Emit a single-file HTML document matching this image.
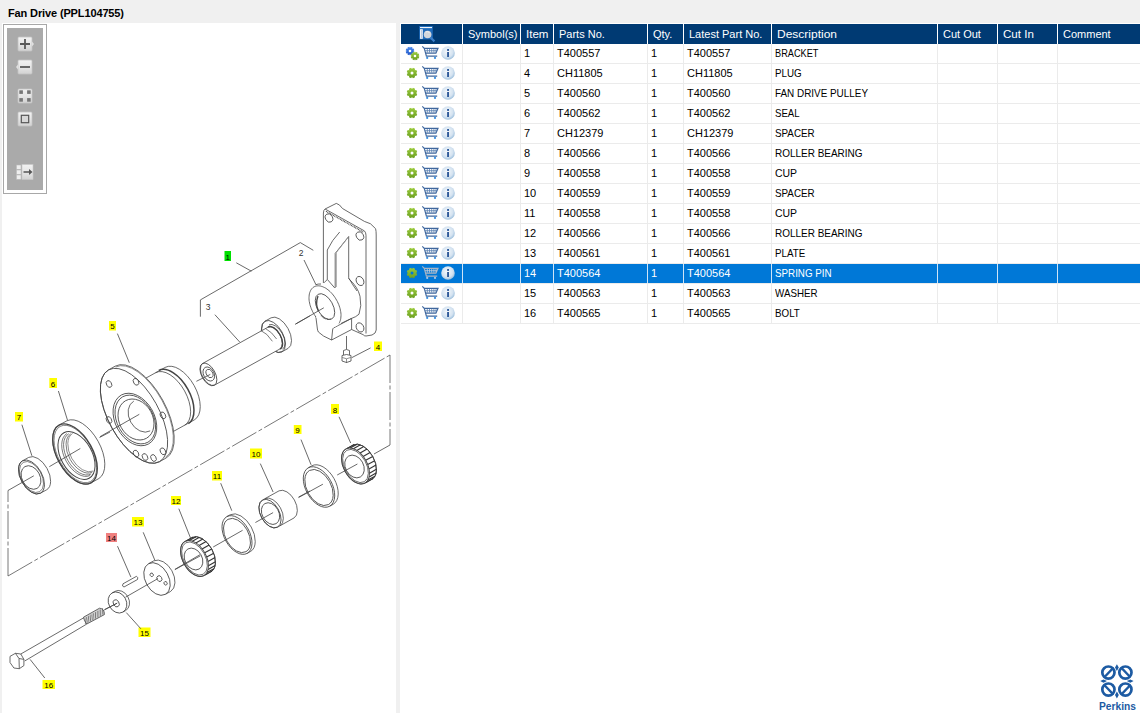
<!DOCTYPE html>
<html><head><meta charset="utf-8">
<style>
*{margin:0;padding:0;box-sizing:border-box}
html,body{width:1140px;height:713px;overflow:hidden;background:#fff;font-family:"Liberation Sans",sans-serif;position:relative}
#title{position:absolute;left:0;top:0;width:1140px;height:23px;background:#f0f0f0;}
#title span{position:absolute;left:8px;top:7px;font-size:11px;font-weight:bold;color:#000;white-space:nowrap;letter-spacing:-0.13px}
#leftstrip{position:absolute;left:0;top:23px;width:2px;height:690px;background:#f0f0f0}
#splitter{position:absolute;left:396px;top:23px;width:4px;height:690px;background:#f0f0f0}
.th{position:absolute;top:24px;height:20px;background:#003a73;color:#fff;font-size:11px;line-height:20px;padding-left:5px;white-space:nowrap;overflow:hidden;border-right:1px solid #fff}
.td{position:absolute;height:19px;font-size:11px;line-height:19px;padding-left:3px;white-space:nowrap;overflow:hidden;border-right:1px solid #ebebeb;color:#000}
.td.sel{background:#0078d7;color:#fff;border-right-color:#cfe4f7}
.rowline{position:absolute;left:401px;width:739px;height:1px;background:#ebebeb}
</style></head><body>
<div id="title"><span>Fan Drive (PPL104755)</span></div>
<div id="leftstrip"></div>
<div id="splitter"></div>
<svg style="position:absolute;left:0;top:0" width="396" height="713" viewBox="0 0 396 713" font-family="Liberation Sans, sans-serif"><g stroke="#444" stroke-width="0.8" fill="none">
<path d="M8.0,576.0 L8.0,490.5" stroke-dasharray="28,2.5,4,2.5" stroke="#555"/>
<path d="M8.0,576.0 L390.0,355.0" stroke-dasharray="28,2.5,4,2.5" stroke="#555"/>
<path d="M390.0,355.0 L390.0,445.0" stroke-dasharray="28,2.5,4,2.5" stroke="#555"/>
<path d="M390.0,445.0 L374.0,454.0" />
<path d="M200.4,316.7 L200.4,299.9 L300.3,242.6 L313.3,250.3" />
<rect x="224.5" y="251" width="6.5" height="10" fill="#00e000" stroke="none"/>
<text x="227.8" y="259.5" text-anchor="middle" fill="#000" stroke="none" style="font-family:'Liberation Sans',sans-serif;font-size:8px">1</text>
<path d="M236.3,262.8 L251.4,271.2" />
<text x="301" y="256" text-anchor="middle" fill="#333" stroke="none" style="font-family:'Liberation Sans',sans-serif;font-size:8.5px">2</text>
<path d="M304.0,260.0 L316.0,284.8" />
<text x="208" y="310" text-anchor="middle" fill="#333" stroke="none" style="font-family:'Liberation Sans',sans-serif;font-size:8.5px">3</text>
<path d="M214.9,314.7 L239.7,342.0" />
<path d="M282.0,351.8 A9.6,17.5 -29.0 0 1 265.0,321.2 L271.1,317.8 A9.6,17.5 -29.0 0 1 288.1,348.4 Z" fill="#fff" />
<ellipse cx="273.5" cy="336.5" rx="9.6" ry="17.5" transform="rotate(-29.0 273.5 336.5)" />
<path d="M214.4,385.2 A6.8,12.4 -29.0 0 1 202.4,363.6 L268.0,327.2 A6.8,12.4 -29.0 0 1 280.0,348.9 Z" fill="#fff" />
<path d="M280.1,349.1 A6.9,12.6 -29.0 0 0 267.9,327.0" stroke-width="1.4"/>
<path d="M282.5,349.3 A7.7,14.0 -29.0 0 0 269.0,324.8" />
<ellipse cx="208.4" cy="374.4" rx="6.8" ry="12.4" transform="rotate(-29.0 208.4 374.4)" />
<ellipse cx="208.8" cy="374.0" rx="5.2" ry="7.5" transform="rotate(-29.0 208.8 374.0)" />
<ellipse cx="209.5" cy="373.5" rx="3.1" ry="4.5" transform="rotate(-29.0 209.5 373.5)" />
<path d="M260.8,330.5 Q267,333 272.4,341.3 M265.5,328.5 Q272,332 276.6,339" stroke-width="0.7"/>
<path d="M196.4,381.3 L210.3,374.4" />
<path d="M295.2,324.3 L309.9,315.9" />
<path d="M323.4,283 L323.4,213 Q323.6,209.5 325.1,209 L336.3,203.4 Q339.5,204 342.5,208.5 L364.4,221.4 Q371,222.5 375.6,228.7 Q376.2,231 376.2,235 L376.2,330 Q376,333.5 372,335 L366,336 Q364,336 363.2,334.7 L351.6,329.5"/>
<path d="M325.1,209 L364.4,230.9 Q366,232.5 366,235.4 L366,333.5"/>
<path d="M326.0,211.3 L363.8,232.4" stroke-width="1.3" stroke-dasharray="0.9,0.7"/>
<path d="M339.7,232 Q332,240 327.3,250 L327.3,279.5 L324.2,282.6 M348.7,236.5 L335.2,253.4 L335.2,287.9 M348.7,236.5 L348.7,277.8 Q352,284 357,291"/>
<path d="M348,237.5 L336.3,252.5 L336.3,287" stroke="#999" stroke-width="0.9"/>
<path d="M327.4,279.5 L334.7,287.9" />
<ellipse cx="329.0" cy="218.0" rx="3.5" ry="4.4" transform="rotate(-29.0 329.0 218.0)" />
<ellipse cx="359.9" cy="236.0" rx="3.5" ry="4.4" transform="rotate(-29.0 359.9 236.0)" />
<ellipse cx="360.0" cy="281.0" rx="3.6" ry="4.8" transform="rotate(-29.0 360.0 281.0)" />
<ellipse cx="360.0" cy="327.4" rx="3.6" ry="4.8" transform="rotate(-29.0 360.0 327.4)" />
<path d="M348.4,278.4 Q358,287 360,296.3 Q362,306 359,314.2 Q356,317 351.6,318.4 L351.6,329.5 L331.6,340 Q322,336 318.4,332 Q317.4,330 317.4,329 L315.8,316.3 M333.7,327.9 L351.6,318.4 M333.7,327.9 Q332.6,328.5 332.6,330 L331.6,340 M351.6,318.4 Q348,320 341,323.5"/>
<path d="M315.8,284.7 Q318,283.8 321,284"/>
<ellipse cx="325" cy="306.6" rx="13.3" ry="22.6" transform="rotate(-29 325 306.6)" fill="#fff" stroke="none"/>
<path d="M315.9,317.0 L315.0,315.7 L314.2,314.4 L313.4,313.0 L312.6,311.7 L312.0,310.2 L311.3,308.8 L310.8,307.3 L310.3,305.9 L309.9,304.5 L309.6,303.0 L309.3,301.6 L309.1,300.2 L309.0,298.8 L309.0,297.5 L309.1,296.2 L309.2,295.0 L309.4,293.8 L309.7,292.7 L310.1,291.7 L310.5,290.7 L311.0,289.8 L311.6,289.0 L312.2,288.3 L312.9,287.6 L313.6,287.1 L314.5,286.6 L315.3,286.3 L316.2,286.0 L317.2,285.9 L318.2,285.8 L319.2,285.9 L320.3,286.0 L321.3,286.3 L322.4,286.6 L323.5,287.1 L324.6,287.6 L325.8,288.2 L326.9,289.0 L328.0,289.8 L329.1,290.7 L330.1,291.6 L331.2,292.7 L332.2,293.8 L333.2,295.0 L334.1,296.2 L335.0,297.5 L335.8,298.8 L336.6,300.2 L337.4,301.5 L338.0,303.0 L338.7,304.4 L339.2,305.9 L339.7,307.3 L340.1,308.7 L340.4,310.2 L340.7,311.6 L340.9,313.0 L341.0,314.4 L341.0,315.7 L340.9,317.0 L340.8,318.2 L340.6,319.4 L340.3,320.5 L339.9,321.5 L339.5,322.5 L339.0,323.4"/>
<ellipse cx="325" cy="306.6" rx="7.9" ry="14.1" transform="rotate(-29 325 306.6)"/>
<path d="M318,296 Q315,304 318.5,311" stroke-width="1.3"/>
<path d="M321,315.5 Q326,320.5 331,319" stroke-width="1.2" stroke-dasharray="0.8,0.6"/>
<path d="M295.6,324.0 L323.8,307.8" />
<path d="M346.5,336.0 L346.5,349.5" />
<path d="M343.5,355 L343.5,350.5 Q346.5,348.5 349.5,350.5 L349.5,355" fill="#fff"/>
<path d="M342,355.5 Q346.5,353.5 351,355.5 L351,361 Q346.5,364 342,361 Z" fill="#fff"/>
<path d="M342.3,357.5 Q346.5,360 350.7,357.5 M346.5,359 L346.5,363" stroke-width="0.6"/>
<rect x="374" y="341.5" width="8" height="9.5" fill="#ffff00" stroke="none"/>
<text x="378.0" y="349.5" text-anchor="middle" fill="#000" stroke="none" style="font-family:'Liberation Sans',sans-serif;font-size:8px">4</text>
<path d="M351.7,357.7 L370.6,347.9" />
<path d="M157.5,440.2 A16.5,30.0 -29.0 0 1 128.5,387.8 L165.2,367.4 A16.5,30.0 -29.0 0 1 194.3,419.9 Z" fill="#fff" />
<path d="M188.4,423.7 A16.8,30.5 -29.0 0 0 158.8,370.4" stroke-width="1.5"/>
<path d="M184.7,425.2 A16.5,30.0 -29.0 0 0 155.6,372.7" />
<path d="M159.5,461.7 A25.2,52.5 -29.0 0 1 108.5,369.9 L115.1,366.2 A25.2,52.5 -29.0 0 1 166.0,458.1 Z" fill="#fff" />
<ellipse cx="134.0" cy="415.8" rx="25.2" ry="52.5" transform="rotate(-29.0 134.0 415.8)" />
<path d="M165.5,457.2 A24.7,51.5 -29.0 0 0 115.6,367.1" stroke-width="0.6"/>
<ellipse cx="134.9" cy="419.5" rx="19.6" ry="28.0" transform="rotate(-29.0 134.9 419.5)" />
<ellipse cx="135.3" cy="419.5" rx="18.2" ry="26.0" transform="rotate(-29.0 135.3 419.5)" />
<ellipse cx="136.0" cy="419.5" rx="16.8" ry="21.5" transform="rotate(-29.0 136.0 419.5)" />
<path d="M150.2,430.9 A12.8,17.0 -29.0 0 1 133.8,401.1" />
<ellipse cx="109.0" cy="384.0" rx="2.5" ry="3.6" transform="rotate(-29.0 109.0 384.0)" />
<ellipse cx="136.0" cy="381.8" rx="2.5" ry="3.6" transform="rotate(-29.0 136.0 381.8)" />
<ellipse cx="162.9" cy="415.4" rx="2.5" ry="3.6" transform="rotate(-29.0 162.9 415.4)" />
<ellipse cx="162.9" cy="451.3" rx="2.5" ry="3.6" transform="rotate(-29.0 162.9 451.3)" />
<ellipse cx="109.0" cy="420.0" rx="2.5" ry="3.6" transform="rotate(-29.0 109.0 420.0)" />
<ellipse cx="136.0" cy="453.6" rx="2.5" ry="3.6" transform="rotate(-29.0 136.0 453.6)" />
<ellipse cx="145.0" cy="457.0" rx="2.5" ry="3.6" transform="rotate(-29.0 145.0 457.0)" />
<ellipse cx="153.5" cy="458.0" rx="2.5" ry="3.6" transform="rotate(-29.0 153.5 458.0)" />
<rect x="109" y="321" width="7" height="9.5" fill="#ffff00" stroke="none"/>
<text x="112.5" y="329.0" text-anchor="middle" fill="#000" stroke="none" style="font-family:'Liberation Sans',sans-serif;font-size:8px">5</text>
<path d="M117.4,333.6 L129.3,362.7" />
<path d="M100.0,436.7 L139.3,414.3" />
<path d="M91.0,482.9 A17.8,33.0 -29.0 0 1 59.0,425.1 L66.9,420.8 A17.8,33.0 -29.0 0 1 98.9,478.5 Z" fill="#fff" />
<ellipse cx="75.0" cy="454.0" rx="17.8" ry="33.0" transform="rotate(-29.0 75.0 454.0)" stroke-width="1.3"/>
<ellipse cx="75.3" cy="454.0" rx="17.0" ry="31.5" transform="rotate(-29.0 75.3 454.0)" stroke-width="0.6"/>
<ellipse cx="76.5" cy="455.5" rx="15.6" ry="26.0" transform="rotate(-29.0 76.5 455.5)" stroke-width="1.0"/>
<path d="M90.1,475.5 A14.4,24.0 -29.0 0 1 66.9,433.5" stroke-width="0.7"/>
<path d="M91.2,473.9 A13.8,23.0 -29.0 0 1 68.8,433.7" stroke-width="0.7"/>
<path d="M92.2,472.2 A13.6,22.0 -29.0 0 1 70.8,433.8" stroke-width="0.7"/>
<path d="M93.4,471.0 A13.3,21.5 -29.0 0 1 72.6,433.4" stroke-width="0.6"/>
<rect x="49.3" y="378" width="7.700000000000003" height="10" fill="#ffff00" stroke="none"/>
<text x="53.1" y="386.5" text-anchor="middle" fill="#000" stroke="none" style="font-family:'Liberation Sans',sans-serif;font-size:8px">6</text>
<path d="M58.4,391.0 L67.5,420.2" />
<path d="M49.3,466.7 L80.3,448.5" />
<path d="M99.5,437.5 L110.0,432.0" />
<path d="M40.5,493.2 A10.7,18.5 -29.0 0 1 22.5,460.8 L28.7,457.4 A10.7,18.5 -29.0 0 1 46.6,489.8 Z" fill="#fff" />
<ellipse cx="31.5" cy="477.0" rx="10.7" ry="18.5" transform="rotate(-29.0 31.5 477.0)" />
<ellipse cx="31.5" cy="477.0" rx="10.1" ry="16.8" transform="rotate(-29.0 31.5 477.0)" stroke-width="0.6"/>
<ellipse cx="31.0" cy="477.5" rx="9.0" ry="12.5" transform="rotate(-29.0 31.0 477.5)" />
<rect x="15" y="412" width="8" height="9.5" fill="#ffff00" stroke="none"/>
<text x="19.0" y="420.0" text-anchor="middle" fill="#000" stroke="none" style="font-family:'Liberation Sans',sans-serif;font-size:8px">7</text>
<path d="M21.9,424.7 L31.9,455.8" />
<path d="M8.0,490.5 L33.8,475.8" />
<path d="M365.0,483.1 A11.7,19.5 -29.0 0 1 346.0,448.9 L353.0,445.1 A11.7,19.5 -29.0 0 1 372.0,479.2 Z" fill="#fff" />
<path d="M372.0,479.2 A11.7,19.5 -29.0 0 0 353.0,445.1" stroke="#444" stroke-width="1.0"/>
<path d="M347.2,448.4 L354.2,444.6" stroke="#333" stroke-width="1.1"/>
<path d="M350.1,448.0 L357.1,444.2" stroke="#333" stroke-width="1.1"/>
<path d="M353.4,448.7 L360.4,444.8" stroke="#333" stroke-width="1.1"/>
<path d="M356.8,450.4 L363.8,446.5" stroke="#333" stroke-width="1.1"/>
<path d="M360.1,453.0 L367.1,449.1" stroke="#333" stroke-width="1.1"/>
<path d="M363.1,456.4 L370.1,452.5" stroke="#333" stroke-width="1.1"/>
<path d="M365.7,460.3 L372.7,456.4" stroke="#333" stroke-width="1.1"/>
<path d="M367.7,464.6 L374.7,460.7" stroke="#333" stroke-width="1.1"/>
<path d="M369.0,469.0 L376.0,465.1" stroke="#333" stroke-width="1.1"/>
<path d="M369.4,473.2 L376.4,469.3" stroke="#333" stroke-width="1.1"/>
<path d="M369.1,477.0 L376.1,473.1" stroke="#333" stroke-width="1.1"/>
<path d="M367.9,480.1 L374.9,476.2" stroke="#333" stroke-width="1.1"/>
<path d="M366.0,482.4 L373.0,478.5" stroke="#333" stroke-width="1.1"/>
<ellipse cx="355.5" cy="466.0" rx="11.7" ry="19.5" transform="rotate(-29.0 355.5 466.0)" stroke="#444" stroke-width="0.9"/>
<ellipse cx="355.5" cy="466.0" rx="10.8" ry="18.0" transform="rotate(-29.0 355.5 466.0)" stroke="#444" stroke-width="0.7"/>
<ellipse cx="354.5" cy="466.5" rx="9.0" ry="12.0" transform="rotate(-29.0 354.5 466.5)" />
<rect x="331" y="404" width="8" height="10" fill="#ffff00" stroke="none"/>
<text x="335.0" y="412.5" text-anchor="middle" fill="#000" stroke="none" style="font-family:'Liberation Sans',sans-serif;font-size:8px">8</text>
<path d="M339.0,416.8 L350.7,443.0" />
<path d="M337.2,475.0 L357.4,464.0" />
<ellipse cx="319.0" cy="487.0" rx="13.2" ry="22.0" transform="rotate(-29.0 319.0 487.0)" />
<path d="M333.2,504.3 A13.2,22.0 -29.0 0 0 311.8,465.8" />
<path d="M329.7,506.2 L333.2,504.3 M308.3,467.8 L311.8,465.8" />
<ellipse cx="319.0" cy="487.5" rx="12.1" ry="19.5" transform="rotate(-29.0 319.0 487.5)" />
<rect x="293.8" y="425" width="7.699999999999989" height="9" fill="#ffff00" stroke="none"/>
<text x="297.6" y="432.5" text-anchor="middle" fill="#000" stroke="none" style="font-family:'Liberation Sans',sans-serif;font-size:8px">9</text>
<path d="M301.0,439.6 L311.1,464.8" />
<path d="M298.5,497.6 L322.9,484.2" />
<path d="M277.5,527.2 A9.3,15.5 -29.0 0 1 262.5,500.0 L279.1,490.8 A9.3,15.5 -29.0 0 1 294.1,517.9 Z" fill="#fff" />
<ellipse cx="270.0" cy="513.6" rx="9.3" ry="15.5" transform="rotate(-29.0 270.0 513.6)" />
<ellipse cx="270.5" cy="513.6" rx="8.3" ry="11.5" transform="rotate(-29.0 270.5 513.6)" />
<path d="M280.1,525.7 A9.3,15.5 -29.0 0 0 265.1,498.6" />
<rect x="250" y="448.5" width="12" height="10.0" fill="#ffff00" stroke="none"/>
<text x="256.0" y="457.0" text-anchor="middle" fill="#000" stroke="none" style="font-family:'Liberation Sans',sans-serif;font-size:8px">10</text>
<path d="M260.3,463.6 L273.1,492.0" />
<path d="M298.6,497.0 L310.0,491.0" />
<path d="M255.4,522.5 L273.1,512.6" />
<ellipse cx="237.0" cy="535.0" rx="12.6" ry="21.0" transform="rotate(-29.0 237.0 535.0)" />
<path d="M250.7,551.4 A12.6,21.0 -29.0 0 0 230.3,514.7" />
<path d="M247.2,553.4 L250.7,551.4 M226.8,516.6 L230.3,514.7" />
<ellipse cx="237.0" cy="535.5" rx="11.5" ry="18.5" transform="rotate(-29.0 237.0 535.5)" />
<rect x="212" y="471" width="10" height="9.5" fill="#ffff00" stroke="none"/>
<text x="217.0" y="479.0" text-anchor="middle" fill="#000" stroke="none" style="font-family:'Liberation Sans',sans-serif;font-size:8px">11</text>
<path d="M220.7,483.2 L231.8,510.7" />
<path d="M213.2,547.0 L242.6,530.3" />
<path d="M204.0,575.6 A11.7,19.5 -29.0 0 1 185.0,541.4 L192.0,537.6 A11.7,19.5 -29.0 0 1 211.0,571.7 Z" fill="#fff" />
<path d="M211.0,571.7 A11.7,19.5 -29.0 0 0 192.0,537.6" stroke="#444" stroke-width="1.0"/>
<path d="M186.2,540.9 L193.2,537.1" stroke="#333" stroke-width="1.1"/>
<path d="M189.1,540.5 L196.1,536.7" stroke="#333" stroke-width="1.1"/>
<path d="M192.4,541.2 L199.4,537.3" stroke="#333" stroke-width="1.1"/>
<path d="M195.8,542.9 L202.8,539.0" stroke="#333" stroke-width="1.1"/>
<path d="M199.1,545.5 L206.1,541.6" stroke="#333" stroke-width="1.1"/>
<path d="M202.1,548.9 L209.1,545.0" stroke="#333" stroke-width="1.1"/>
<path d="M204.7,552.8 L211.7,548.9" stroke="#333" stroke-width="1.1"/>
<path d="M206.7,557.1 L213.7,553.2" stroke="#333" stroke-width="1.1"/>
<path d="M208.0,561.5 L215.0,557.6" stroke="#333" stroke-width="1.1"/>
<path d="M208.4,565.7 L215.4,561.8" stroke="#333" stroke-width="1.1"/>
<path d="M208.1,569.5 L215.1,565.6" stroke="#333" stroke-width="1.1"/>
<path d="M206.9,572.6 L213.9,568.7" stroke="#333" stroke-width="1.1"/>
<path d="M205.0,574.9 L212.0,571.0" stroke="#333" stroke-width="1.1"/>
<ellipse cx="194.5" cy="558.5" rx="11.7" ry="19.5" transform="rotate(-29.0 194.5 558.5)" stroke="#444" stroke-width="0.9"/>
<ellipse cx="194.5" cy="558.5" rx="10.8" ry="18.0" transform="rotate(-29.0 194.5 558.5)" stroke="#444" stroke-width="0.7"/>
<ellipse cx="193.5" cy="559.0" rx="8.6" ry="11.5" transform="rotate(-29.0 193.5 559.0)" />
<rect x="171" y="496" width="10" height="9" fill="#ffff00" stroke="none"/>
<text x="176.0" y="503.5" text-anchor="middle" fill="#000" stroke="none" style="font-family:'Liberation Sans',sans-serif;font-size:8px">12</text>
<path d="M178.8,508.7 L190.6,538.2" />
<path d="M174.9,569.6 L200.4,555.8" />
<path d="M174.9,569.4 L200.0,554.7" />
<ellipse cx="157.0" cy="579.0" rx="11.6" ry="17.5" transform="rotate(-29.0 157.0 579.0)" />
<path d="M170.7,591.4 A11.6,17.5 -29.0 0 0 153.8,560.8" />
<path d="M165.5,594.3 L170.7,591.4 M148.5,563.7 L153.8,560.8" />
<ellipse cx="159.4" cy="578.6" rx="2.4" ry="3.0" transform="rotate(-29.0 159.4 578.6)" />
<ellipse cx="151.7" cy="574.8" rx="1.6" ry="1.8" transform="rotate(-29.0 151.7 574.8)" />
<ellipse cx="165.6" cy="583.3" rx="1.6" ry="1.8" transform="rotate(-29.0 165.6 583.3)" />
<rect x="132" y="517" width="12" height="9.5" fill="#ffff00" stroke="none"/>
<text x="138.0" y="525.0" text-anchor="middle" fill="#000" stroke="none" style="font-family:'Liberation Sans',sans-serif;font-size:8px">13</text>
<path d="M143.2,532.3 L154.8,560.1" />
<path d="M125.5,597.2 L157.9,578.6" />
<path d="M123,583.8 L136.5,576.3 Q138.5,577.5 137.5,579.5 L124,587 Q121.5,586.5 123,583.8 Z"/>
<rect x="106" y="533" width="11" height="9" fill="#f08080" stroke="none"/>
<text x="111.5" y="540.5" text-anchor="middle" fill="#000" stroke="none" style="font-family:'Liberation Sans',sans-serif;font-size:8px">14</text>
<path d="M117.5,546.2 L130.9,577.1" />
<ellipse cx="117.5" cy="602.5" rx="8.8" ry="11.0" transform="rotate(-29.0 117.5 602.5)" />
<path d="M125.5,610.7 A8.8,11.0 -29.0 0 0 114.8,591.4" />
<path d="M122.8,612.1 L125.5,610.7 M112.2,592.9 L114.8,591.4" />
<ellipse cx="116.2" cy="603.3" rx="2.8" ry="3.8" transform="rotate(-29.0 116.2 603.3)" />
<rect x="138.5" y="627.5" width="12.0" height="9.5" fill="#ffff00" stroke="none"/>
<text x="144.5" y="635.5" text-anchor="middle" fill="#000" stroke="none" style="font-family:'Liberation Sans',sans-serif;font-size:8px">15</text>
<path d="M126.3,612.6 L140.9,628.8" />
<path d="M104.7,609.5 L117.0,603.3" />
<path d="M10,656.4 L15.4,653.3 L20.8,654 L23.9,659.4 L23.9,665.6 L19.3,668.7 L13.9,668 L10,662.5 Z M15.4,653.3 L19,658.5 L23.9,659.4 M19,658.5 L19.3,668.7"/>
<path d="M20.8,654.0 L84.0,617.6" />
<path d="M24.7,661.0 L86.8,624.0" />
<path d="M83.5,617.2 L99.5,608.2 Q104.5,608.5 104.4,614.6 L86.8,624 Q84,621 83.5,617.2 Z" fill="#d0d0d0" stroke="#444" stroke-width="0.8"/>
<path d="M85.3,624.0 L86.5,617.2" stroke="#555" stroke-width="0.7"/>
<path d="M87.8,622.7 L88.8,615.9" stroke="#555" stroke-width="0.7"/>
<path d="M90.3,621.3 L91.1,614.6" stroke="#555" stroke-width="0.7"/>
<path d="M92.8,620.0 L93.4,613.3" stroke="#555" stroke-width="0.7"/>
<path d="M95.4,618.6 L95.6,612.1" stroke="#555" stroke-width="0.7"/>
<path d="M97.9,617.3 L97.9,610.8" stroke="#555" stroke-width="0.7"/>
<path d="M100.4,615.9 L100.2,609.5" stroke="#555" stroke-width="0.7"/>
<path d="M102.9,614.6 L102.5,608.2" stroke="#555" stroke-width="0.7"/>
<rect x="42.5" y="680" width="12.5" height="9" fill="#ffff00" stroke="none"/>
<text x="48.8" y="687.5" text-anchor="middle" fill="#000" stroke="none" style="font-family:'Liberation Sans',sans-serif;font-size:8px">16</text>
<path d="M30.1,659.4 L44.8,678.0" />
<path d="M104.2,610.0 L117.3,603.0" />
</g></svg>
<div style="position:absolute;left:3px;top:24px;width:44px;height:170px;border:1px solid #a8a8a8;background:#fff"></div>
<div style="position:absolute;left:7px;top:28px;width:36px;height:162px;background:#aaaaaa"></div>
<svg style="position:absolute;left:0;top:0" width="50" height="200" viewBox="0 0 50 200">
<defs>
<linearGradient id="tbb" x1="0" y1="0" x2="0" y2="1"><stop offset="0" stop-color="#f2f2f2"/><stop offset="0.5" stop-color="#e6e6e6"/><stop offset="1" stop-color="#d2d2d2"/></linearGradient>
</defs>
<!-- zoom in -->
<rect x="18" y="37" width="14" height="14" rx="1" fill="url(#tbb)" stroke="#c4c4c4" stroke-width="0.8"/>
<path d="M32,41.5 L34,44 L32,46.5Z" fill="#e0e0e0"/>
<path d="M20,44 H30 M25,39 V49" stroke="#5a5a5a" stroke-width="1.8"/>
<!-- zoom out -->
<rect x="18" y="60" width="14" height="14" rx="1" fill="url(#tbb)" stroke="#c4c4c4" stroke-width="0.8"/>
<path d="M18,64.5 L16,67 L18,69.5Z" fill="#e0e0e0"/>
<path d="M20,67 H30" stroke="#5a5a5a" stroke-width="1.8"/>
<!-- fit -->
<rect x="18" y="89" width="14" height="14" rx="1" fill="url(#tbb)" stroke="#c4c4c4" stroke-width="0.8"/>
<rect x="19.3" y="90.3" width="3.6" height="3.6" fill="#777"/><rect x="27.1" y="90.3" width="3.6" height="3.6" fill="#777"/>
<rect x="19.3" y="98.1" width="3.6" height="3.6" fill="#777"/><rect x="27.1" y="98.1" width="3.6" height="3.6" fill="#777"/>
<!-- box -->
<rect x="18" y="112" width="14" height="14" rx="1" fill="url(#tbb)" stroke="#c4c4c4" stroke-width="0.8"/>
<rect x="21.3" y="115.3" width="7.4" height="7.4" fill="#d8d8d8" stroke="#555" stroke-width="1.2"/>
<!-- export -->
<rect x="16.5" y="165" width="4.5" height="4.3" fill="#eee" stroke="#bbb" stroke-width="0.6"/>
<rect x="16.5" y="170" width="4.5" height="4.3" fill="#eee" stroke="#bbb" stroke-width="0.6"/>
<rect x="16.5" y="175" width="4.5" height="4.3" fill="#eee" stroke="#bbb" stroke-width="0.6"/>
<rect x="22" y="164.5" width="11" height="15" fill="url(#tbb)" stroke="#c8c8c8" stroke-width="0.6"/>
<path d="M23.5,172 H30" stroke="#555" stroke-width="1.5"/><path d="M29,169 L32.5,172 L29,175Z" fill="#555"/>
</svg>

<div style="position:absolute;left:401px;top:23px;width:739px;height:1px;background:#fff"></div>
<div class="th" style="left:401px;width:62px"></div>
<div class="th" style="left:463px;width:58px">Symbol(s)</div>
<div class="th" style="left:521px;width:33px"><span style="display:inline-block;transform:scaleX(1.05);transform-origin:0 0">Item</span></div>
<div class="th" style="left:554px;width:94px">Parts No.</div>
<div class="th" style="left:648px;width:36px">Qty.</div>
<div class="th" style="left:684px;width:88px">Latest Part No.</div>
<div class="th" style="left:772px;width:166px"><span style="display:inline-block;transform:scaleX(1.09);transform-origin:0 0">Description</span></div>
<div class="th" style="left:938px;width:60px">Cut Out</div>
<div class="th" style="left:998px;width:60px"><span style="display:inline-block;transform:scaleX(1.05);transform-origin:0 0">Cut In</span></div>
<div class="th" style="left:1058px;width:83px">Comment</div>
<div class="rowline" style="top:63px"></div>
<div class="td" style="left:401px;top:44px;width:62px;"></div>
<div class="td" style="left:463px;top:44px;width:58px;"></div>
<div class="td" style="left:521px;top:44px;width:33px;">1</div>
<div class="td" style="left:554px;top:44px;width:94px; padding-left:3px;">T400557</div>
<div class="td" style="left:648px;top:44px;width:36px; padding-left:3px;">1</div>
<div class="td" style="left:684px;top:44px;width:88px; padding-left:3px;">T400557</div>
<div class="td" style="left:772px;top:44px;width:166px; padding-left:3px;"><span style="display:inline-block;transform:scaleX(0.835);transform-origin:0 0">BRACKET</span></div>
<div class="td" style="left:938px;top:44px;width:60px;"></div>
<div class="td" style="left:998px;top:44px;width:60px;"></div>
<div class="td" style="left:1058px;top:44px;width:83px;"></div>
<div class="rowline" style="top:83px"></div>
<div class="td" style="left:401px;top:64px;width:62px;"></div>
<div class="td" style="left:463px;top:64px;width:58px;"></div>
<div class="td" style="left:521px;top:64px;width:33px;">4</div>
<div class="td" style="left:554px;top:64px;width:94px; padding-left:3px;">CH11805</div>
<div class="td" style="left:648px;top:64px;width:36px; padding-left:3px;">1</div>
<div class="td" style="left:684px;top:64px;width:88px; padding-left:3px;">CH11805</div>
<div class="td" style="left:772px;top:64px;width:166px; padding-left:3px;"><span style="display:inline-block;transform:scaleX(0.89);transform-origin:0 0">PLUG</span></div>
<div class="td" style="left:938px;top:64px;width:60px;"></div>
<div class="td" style="left:998px;top:64px;width:60px;"></div>
<div class="td" style="left:1058px;top:64px;width:83px;"></div>
<div class="rowline" style="top:103px"></div>
<div class="td" style="left:401px;top:84px;width:62px;"></div>
<div class="td" style="left:463px;top:84px;width:58px;"></div>
<div class="td" style="left:521px;top:84px;width:33px;">5</div>
<div class="td" style="left:554px;top:84px;width:94px; padding-left:3px;">T400560</div>
<div class="td" style="left:648px;top:84px;width:36px; padding-left:3px;">1</div>
<div class="td" style="left:684px;top:84px;width:88px; padding-left:3px;">T400560</div>
<div class="td" style="left:772px;top:84px;width:166px; padding-left:3px;"><span style="display:inline-block;transform:scaleX(0.9);transform-origin:0 0">FAN DRIVE PULLEY</span></div>
<div class="td" style="left:938px;top:84px;width:60px;"></div>
<div class="td" style="left:998px;top:84px;width:60px;"></div>
<div class="td" style="left:1058px;top:84px;width:83px;"></div>
<div class="rowline" style="top:123px"></div>
<div class="td" style="left:401px;top:104px;width:62px;"></div>
<div class="td" style="left:463px;top:104px;width:58px;"></div>
<div class="td" style="left:521px;top:104px;width:33px;">6</div>
<div class="td" style="left:554px;top:104px;width:94px; padding-left:3px;">T400562</div>
<div class="td" style="left:648px;top:104px;width:36px; padding-left:3px;">1</div>
<div class="td" style="left:684px;top:104px;width:88px; padding-left:3px;">T400562</div>
<div class="td" style="left:772px;top:104px;width:166px; padding-left:3px;"><span style="display:inline-block;transform:scaleX(0.874);transform-origin:0 0">SEAL</span></div>
<div class="td" style="left:938px;top:104px;width:60px;"></div>
<div class="td" style="left:998px;top:104px;width:60px;"></div>
<div class="td" style="left:1058px;top:104px;width:83px;"></div>
<div class="rowline" style="top:143px"></div>
<div class="td" style="left:401px;top:124px;width:62px;"></div>
<div class="td" style="left:463px;top:124px;width:58px;"></div>
<div class="td" style="left:521px;top:124px;width:33px;">7</div>
<div class="td" style="left:554px;top:124px;width:94px; padding-left:3px;">CH12379</div>
<div class="td" style="left:648px;top:124px;width:36px; padding-left:3px;">1</div>
<div class="td" style="left:684px;top:124px;width:88px; padding-left:3px;">CH12379</div>
<div class="td" style="left:772px;top:124px;width:166px; padding-left:3px;"><span style="display:inline-block;transform:scaleX(0.893);transform-origin:0 0">SPACER</span></div>
<div class="td" style="left:938px;top:124px;width:60px;"></div>
<div class="td" style="left:998px;top:124px;width:60px;"></div>
<div class="td" style="left:1058px;top:124px;width:83px;"></div>
<div class="rowline" style="top:163px"></div>
<div class="td" style="left:401px;top:144px;width:62px;"></div>
<div class="td" style="left:463px;top:144px;width:58px;"></div>
<div class="td" style="left:521px;top:144px;width:33px;">8</div>
<div class="td" style="left:554px;top:144px;width:94px; padding-left:3px;">T400566</div>
<div class="td" style="left:648px;top:144px;width:36px; padding-left:3px;">1</div>
<div class="td" style="left:684px;top:144px;width:88px; padding-left:3px;">T400566</div>
<div class="td" style="left:772px;top:144px;width:166px; padding-left:3px;"><span style="display:inline-block;transform:scaleX(0.906);transform-origin:0 0">ROLLER BEARING</span></div>
<div class="td" style="left:938px;top:144px;width:60px;"></div>
<div class="td" style="left:998px;top:144px;width:60px;"></div>
<div class="td" style="left:1058px;top:144px;width:83px;"></div>
<div class="rowline" style="top:183px"></div>
<div class="td" style="left:401px;top:164px;width:62px;"></div>
<div class="td" style="left:463px;top:164px;width:58px;"></div>
<div class="td" style="left:521px;top:164px;width:33px;">9</div>
<div class="td" style="left:554px;top:164px;width:94px; padding-left:3px;">T400558</div>
<div class="td" style="left:648px;top:164px;width:36px; padding-left:3px;">1</div>
<div class="td" style="left:684px;top:164px;width:88px; padding-left:3px;">T400558</div>
<div class="td" style="left:772px;top:164px;width:166px; padding-left:3px;"><span style="display:inline-block;transform:scaleX(0.95);transform-origin:0 0">CUP</span></div>
<div class="td" style="left:938px;top:164px;width:60px;"></div>
<div class="td" style="left:998px;top:164px;width:60px;"></div>
<div class="td" style="left:1058px;top:164px;width:83px;"></div>
<div class="rowline" style="top:203px"></div>
<div class="td" style="left:401px;top:184px;width:62px;"></div>
<div class="td" style="left:463px;top:184px;width:58px;"></div>
<div class="td" style="left:521px;top:184px;width:33px;">10</div>
<div class="td" style="left:554px;top:184px;width:94px; padding-left:3px;">T400559</div>
<div class="td" style="left:648px;top:184px;width:36px; padding-left:3px;">1</div>
<div class="td" style="left:684px;top:184px;width:88px; padding-left:3px;">T400559</div>
<div class="td" style="left:772px;top:184px;width:166px; padding-left:3px;"><span style="display:inline-block;transform:scaleX(0.893);transform-origin:0 0">SPACER</span></div>
<div class="td" style="left:938px;top:184px;width:60px;"></div>
<div class="td" style="left:998px;top:184px;width:60px;"></div>
<div class="td" style="left:1058px;top:184px;width:83px;"></div>
<div class="rowline" style="top:223px"></div>
<div class="td" style="left:401px;top:204px;width:62px;"></div>
<div class="td" style="left:463px;top:204px;width:58px;"></div>
<div class="td" style="left:521px;top:204px;width:33px;">11</div>
<div class="td" style="left:554px;top:204px;width:94px; padding-left:3px;">T400558</div>
<div class="td" style="left:648px;top:204px;width:36px; padding-left:3px;">1</div>
<div class="td" style="left:684px;top:204px;width:88px; padding-left:3px;">T400558</div>
<div class="td" style="left:772px;top:204px;width:166px; padding-left:3px;"><span style="display:inline-block;transform:scaleX(0.95);transform-origin:0 0">CUP</span></div>
<div class="td" style="left:938px;top:204px;width:60px;"></div>
<div class="td" style="left:998px;top:204px;width:60px;"></div>
<div class="td" style="left:1058px;top:204px;width:83px;"></div>
<div class="rowline" style="top:243px"></div>
<div class="td" style="left:401px;top:224px;width:62px;"></div>
<div class="td" style="left:463px;top:224px;width:58px;"></div>
<div class="td" style="left:521px;top:224px;width:33px;">12</div>
<div class="td" style="left:554px;top:224px;width:94px; padding-left:3px;">T400566</div>
<div class="td" style="left:648px;top:224px;width:36px; padding-left:3px;">1</div>
<div class="td" style="left:684px;top:224px;width:88px; padding-left:3px;">T400566</div>
<div class="td" style="left:772px;top:224px;width:166px; padding-left:3px;"><span style="display:inline-block;transform:scaleX(0.906);transform-origin:0 0">ROLLER BEARING</span></div>
<div class="td" style="left:938px;top:224px;width:60px;"></div>
<div class="td" style="left:998px;top:224px;width:60px;"></div>
<div class="td" style="left:1058px;top:224px;width:83px;"></div>
<div class="rowline" style="top:263px"></div>
<div class="td" style="left:401px;top:244px;width:62px;"></div>
<div class="td" style="left:463px;top:244px;width:58px;"></div>
<div class="td" style="left:521px;top:244px;width:33px;">13</div>
<div class="td" style="left:554px;top:244px;width:94px; padding-left:3px;">T400561</div>
<div class="td" style="left:648px;top:244px;width:36px; padding-left:3px;">1</div>
<div class="td" style="left:684px;top:244px;width:88px; padding-left:3px;">T400561</div>
<div class="td" style="left:772px;top:244px;width:166px; padding-left:3px;"><span style="display:inline-block;transform:scaleX(0.89);transform-origin:0 0">PLATE</span></div>
<div class="td" style="left:938px;top:244px;width:60px;"></div>
<div class="td" style="left:998px;top:244px;width:60px;"></div>
<div class="td" style="left:1058px;top:244px;width:83px;"></div>
<div class="rowline" style="top:283px"></div>
<div class="td sel" style="left:401px;top:264px;width:62px;"></div>
<div class="td sel" style="left:463px;top:264px;width:58px;"></div>
<div class="td sel" style="left:521px;top:264px;width:33px;">14</div>
<div class="td sel" style="left:554px;top:264px;width:94px; padding-left:3px;">T400564</div>
<div class="td sel" style="left:648px;top:264px;width:36px; padding-left:3px;">1</div>
<div class="td sel" style="left:684px;top:264px;width:88px; padding-left:3px;">T400564</div>
<div class="td sel" style="left:772px;top:264px;width:166px; padding-left:3px;"><span style="display:inline-block;transform:scaleX(0.89);transform-origin:0 0">SPRING PIN</span></div>
<div class="td sel" style="left:938px;top:264px;width:60px;"></div>
<div class="td sel" style="left:998px;top:264px;width:60px;"></div>
<div class="td sel" style="left:1058px;top:264px;width:83px;"></div>
<div class="rowline" style="top:303px"></div>
<div class="td" style="left:401px;top:284px;width:62px;"></div>
<div class="td" style="left:463px;top:284px;width:58px;"></div>
<div class="td" style="left:521px;top:284px;width:33px;">15</div>
<div class="td" style="left:554px;top:284px;width:94px; padding-left:3px;">T400563</div>
<div class="td" style="left:648px;top:284px;width:36px; padding-left:3px;">1</div>
<div class="td" style="left:684px;top:284px;width:88px; padding-left:3px;">T400563</div>
<div class="td" style="left:772px;top:284px;width:166px; padding-left:3px;"><span style="display:inline-block;transform:scaleX(0.89);transform-origin:0 0">WASHER</span></div>
<div class="td" style="left:938px;top:284px;width:60px;"></div>
<div class="td" style="left:998px;top:284px;width:60px;"></div>
<div class="td" style="left:1058px;top:284px;width:83px;"></div>
<div class="rowline" style="top:323px"></div>
<div class="td" style="left:401px;top:304px;width:62px;"></div>
<div class="td" style="left:463px;top:304px;width:58px;"></div>
<div class="td" style="left:521px;top:304px;width:33px;">16</div>
<div class="td" style="left:554px;top:304px;width:94px; padding-left:3px;">T400565</div>
<div class="td" style="left:648px;top:304px;width:36px; padding-left:3px;">1</div>
<div class="td" style="left:684px;top:304px;width:88px; padding-left:3px;">T400565</div>
<div class="td" style="left:772px;top:304px;width:166px; padding-left:3px;"><span style="display:inline-block;transform:scaleX(0.89);transform-origin:0 0">BOLT</span></div>
<div class="td" style="left:938px;top:304px;width:60px;"></div>
<div class="td" style="left:998px;top:304px;width:60px;"></div>
<div class="td" style="left:1058px;top:304px;width:83px;"></div>

<svg style="position:absolute;left:0;top:0" width="1140" height="330" viewBox="0 0 1140 330">
<defs>
<radialGradient id="ig" cx="0.45" cy="0.4" r="0.6"><stop offset="0" stop-color="#f4f8fc"/><stop offset="0.7" stop-color="#d3e2f0"/><stop offset="1" stop-color="#9dbfdc"/></radialGradient>
<linearGradient id="gg" x1="0" y1="0" x2="0" y2="1"><stop offset="0" stop-color="#9ccb3e"/><stop offset="1" stop-color="#6a9f20"/></linearGradient>
<linearGradient id="bg" x1="0" y1="0" x2="0" y2="1"><stop offset="0" stop-color="#4f8ff0"/><stop offset="1" stop-color="#1f55c8"/></linearGradient>
<g id="cart">
<path d="M0.3,0.4 L2.2,2.2 L3.6,7.2 L4.4,10.2 L15.2,10.2" fill="none" stroke="#3f679e" stroke-width="1.2"/>
<path d="M2.2,2.3 L16,2.3 L13.9,7.2 L3.6,7.2" fill="none" stroke="#3f679e" stroke-width="1.2"/>
<path d="M5.3,3 V6.6 M7.5,3 V6.6 M9.7,3 V6.6 M11.9,3 V6.6 M14,3 V6.2 M3,4.7 H15" stroke="#5b7fb0" stroke-width="0.8"/>
<circle cx="5.2" cy="11.9" r="1.1" fill="#3a8fe0"/><circle cx="13" cy="11.9" r="1.1" fill="#3a8fe0"/>
</g>
<g id="cartsel">
<path d="M0.3,0.4 L2.2,2.2 L3.6,7.2 L4.4,10.2 L15.2,10.2" fill="none" stroke="#aab4c2" stroke-width="1.2"/>
<path d="M2.2,2.3 L16,2.3 L13.9,7.2 L3.6,7.2" fill="none" stroke="#aab4c2" stroke-width="1.2"/>
<path d="M5.3,3 V6.6 M7.5,3 V6.6 M9.7,3 V6.6 M11.9,3 V6.6 M14,3 V6.2 M3,4.7 H15" stroke="#c5cdd8" stroke-width="0.8"/>
<circle cx="5.2" cy="11.9" r="1.1" fill="#b0c4dc"/><circle cx="13" cy="11.9" r="1.1" fill="#b0c4dc"/>
</g>
<g id="info"><circle cx="0" cy="0" r="6.8" fill="url(#ig)"/><rect x="-0.9" y="-4" width="1.9" height="1.9" fill="#2f5a9a"/><rect x="-0.9" y="-1" width="1.9" height="5" fill="#2f5a9a"/></g>
<g id="gear"><path d="M4.00,0.03 L5.22,0.93 L4.35,3.03 L2.85,2.81 L2.81,2.85 L3.03,4.35 L0.93,5.22 L0.03,4.00 L-0.03,4.00 L-0.93,5.22 L-3.03,4.35 L-2.81,2.85 L-2.85,2.81 L-4.35,3.03 L-5.22,0.93 L-4.00,0.03 L-4.00,-0.03 L-5.22,-0.93 L-4.35,-3.03 L-2.85,-2.81 L-2.81,-2.85 L-3.03,-4.35 L-0.93,-5.22 L-0.03,-4.00 L0.03,-4.00 L0.93,-5.22 L3.03,-4.35 L2.81,-2.85 L2.85,-2.81 L4.35,-3.03 L5.22,-0.93 L4.00,-0.03Z M1.50,0 A1.5,1.5 0 1 0 -1.50,0 A1.5,1.5 0 1 0 1.50,0Z" fill="url(#gg)" fill-rule="evenodd"/></g>
</defs>
<g>
<rect x="419.2" y="26" width="13.6" height="13.4" fill="#1f6cbc"/>
<rect x="420" y="27" width="12" height="1.1" fill="#f2f4f8"/>
<rect x="420" y="29.2" width="2.8" height="9.6" fill="#f4f6fa"/>
<path d="M420.8,31 h1.2 M420.8,33 h1.2 M420.8,35 h1.2 M420.8,37 h1.2" stroke="#5a7fb5" stroke-width="0.7"/>
<path d="M430.8,37.8 L434.4,41.4" stroke="#3b7ec8" stroke-width="2.2"/>
<circle cx="427.5" cy="34.4" r="4.6" fill="#2a6db8"/>
<circle cx="427.6" cy="34.5" r="3.8" fill="#d3d6dc"/>
<path d="M425.5,32 Q427.5,31 429.5,32.5" stroke="#f4f4f6" stroke-width="0.9" fill="none"/>
</g>
<g transform="translate(410,51)"><path d="M3.30,0.03 L4.33,0.77 L3.61,2.52 L2.35,2.32 L2.32,2.35 L2.52,3.61 L0.77,4.33 L0.03,3.30 L-0.03,3.30 L-0.77,4.33 L-2.52,3.61 L-2.32,2.35 L-2.35,2.32 L-3.61,2.52 L-4.33,0.77 L-3.30,0.03 L-3.30,-0.03 L-4.33,-0.77 L-3.61,-2.52 L-2.35,-2.32 L-2.32,-2.35 L-2.52,-3.61 L-0.77,-4.33 L-0.03,-3.30 L0.03,-3.30 L0.77,-4.33 L2.52,-3.61 L2.32,-2.35 L2.35,-2.32 L3.61,-2.52 L4.33,-0.77 L3.30,-0.03Z M1.30,0 A1.3,1.3 0 1 0 -1.30,0 A1.3,1.3 0 1 0 1.30,0Z" fill="url(#bg)" fill-rule="evenodd"/></g>
<g transform="translate(415,56)"><path d="M3.30,0.03 L4.33,0.77 L3.61,2.52 L2.35,2.32 L2.32,2.35 L2.52,3.61 L0.77,4.33 L0.03,3.30 L-0.03,3.30 L-0.77,4.33 L-2.52,3.61 L-2.32,2.35 L-2.35,2.32 L-3.61,2.52 L-4.33,0.77 L-3.30,0.03 L-3.30,-0.03 L-4.33,-0.77 L-3.61,-2.52 L-2.35,-2.32 L-2.32,-2.35 L-2.52,-3.61 L-0.77,-4.33 L-0.03,-3.30 L0.03,-3.30 L0.77,-4.33 L2.52,-3.61 L2.32,-2.35 L2.35,-2.32 L3.61,-2.52 L4.33,-0.77 L3.30,-0.03Z M1.30,0 A1.3,1.3 0 1 0 -1.30,0 A1.3,1.3 0 1 0 1.30,0Z" fill="url(#gg)" fill-rule="evenodd"/></g>
<use href="#cart" x="422" y="46"/>
<use href="#info" x="448" y="53"/>
<use href="#gear" x="412" y="73"/>
<use href="#cart" x="422" y="66"/>
<use href="#info" x="448" y="73"/>
<use href="#gear" x="412" y="93"/>
<use href="#cart" x="422" y="86"/>
<use href="#info" x="448" y="93"/>
<use href="#gear" x="412" y="113"/>
<use href="#cart" x="422" y="106"/>
<use href="#info" x="448" y="113"/>
<use href="#gear" x="412" y="133"/>
<use href="#cart" x="422" y="126"/>
<use href="#info" x="448" y="133"/>
<use href="#gear" x="412" y="153"/>
<use href="#cart" x="422" y="146"/>
<use href="#info" x="448" y="153"/>
<use href="#gear" x="412" y="173"/>
<use href="#cart" x="422" y="166"/>
<use href="#info" x="448" y="173"/>
<use href="#gear" x="412" y="193"/>
<use href="#cart" x="422" y="186"/>
<use href="#info" x="448" y="193"/>
<use href="#gear" x="412" y="213"/>
<use href="#cart" x="422" y="206"/>
<use href="#info" x="448" y="213"/>
<use href="#gear" x="412" y="233"/>
<use href="#cart" x="422" y="226"/>
<use href="#info" x="448" y="233"/>
<use href="#gear" x="412" y="253"/>
<use href="#cart" x="422" y="246"/>
<use href="#info" x="448" y="253"/>
<use href="#gear" x="412" y="273"/>
<use href="#cartsel" x="422" y="266"/>
<use href="#info" x="448" y="273"/>
<use href="#gear" x="412" y="293"/>
<use href="#cart" x="422" y="286"/>
<use href="#info" x="448" y="293"/>
<use href="#gear" x="412" y="313"/>
<use href="#cart" x="422" y="306"/>
<use href="#info" x="448" y="313"/>
</svg>
<svg style="position:absolute;left:1090px;top:655px" width="50" height="58" viewBox="1090 655 50 58">
<g fill="none" stroke="#1d5ba3" stroke-width="2.7">
<circle cx="1108.4" cy="672.6" r="6.1"/>
<circle cx="1125.4" cy="672.6" r="6.1"/>
<circle cx="1108.4" cy="689.6" r="6.1"/>
<circle cx="1125.4" cy="689.6" r="6.1"/>
<path d="M1104.3,677.2 L1113.5,667.6 M1121.2,667.6 L1130.4,677.2 M1104.3,685 L1113.5,694.6 M1121.2,694.6 L1130.4,685" stroke-width="2.3"/>
</g>
<path d="M1116.9,664.3 L1118.8,667.5 L1116.9,671 L1115,667.5Z M1116.9,691.5 L1118.8,695 L1116.9,698.6 L1115,695Z M1100.2,681.1 L1103.5,679.4 L1107,681.1 L1103.5,682.8Z M1126.8,681.1 L1130.3,679.4 L1133.6,681.1 L1130.3,682.8Z" fill="#1d5ba3"/>
<text x="1099" y="710" font-family="Liberation Sans" font-weight="bold" font-size="10.5" fill="#1d5ba3" textLength="37" lengthAdjust="spacingAndGlyphs">Perkins</text>
</svg>

</body></html>
